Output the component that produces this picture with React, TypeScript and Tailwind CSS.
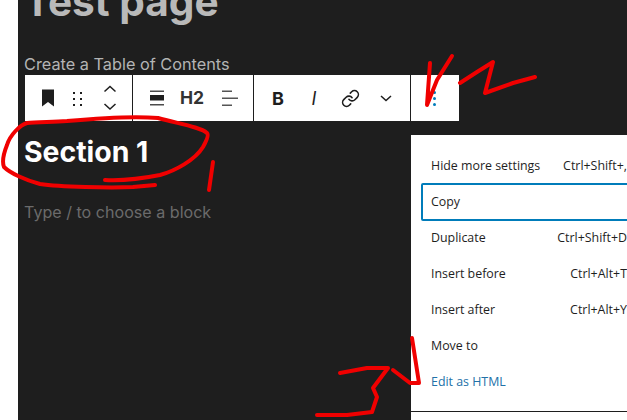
import React from "react";
import { Link } from "lucide-react";

const menuItems: { label: string; shortcut?: string; focus?: boolean; blue?: boolean }[] = [
  { label: "Hide more settings", shortcut: "Ctrl+Shift+," },
  { label: "Copy", focus: true },
  { label: "Duplicate", shortcut: "Ctrl+Shift+D" },
  { label: "Insert before", shortcut: "Ctrl+Alt+T" },
  { label: "Insert after", shortcut: "Ctrl+Alt+Y" },
  { label: "Move to" },
  { label: "Edit as HTML", blue: true },
];

function Bookmark() {
  return (
    <svg width="24" height="24" viewBox="0 0 24 24" className="text-[#1e1e1e]">
      <path d="M6 3.500h12v17l-6-4.600-6 4.600z" fill="currentColor" />
    </svg>
  );
}

function Drag() {
  return (
    <svg width="24" height="24" viewBox="0 0 24 24" fill="#1e1e1e">
      <path d="M6 6h2v2H6zM13 6h2v2h-2zM6 12h2v2H6zM13 12h2v2h-2zM6 18h2v2H6zM13 18h2v2h-2z" />
    </svg>
  );
}

function Mover() {
  return (
    <svg width="24" height="32" viewBox="0 0 24 32" fill="none" stroke="#1e1e1e" strokeWidth="1.5">
      <path d="M6.500 9.500l5.500-5 5.500 5" />
      <path d="M6.500 22l5.500 5 5.500-5" />
    </svg>
  );
}

function AlignWide() {
  return (
    <svg width="24" height="24" viewBox="0 0 24 24" fill="#1e1e1e">
      <path d="M5 4.500h14V6H5z" opacity=".8" />
      <path d="M5 9h14v5.500H5z" />
      <path d="M5 18h14v1.500H5z" opacity=".8" />
    </svg>
  );
}

function HeadingAlign() {
  return (
    <svg width="24" height="24" viewBox="0 0 24 24" fill="#555">
      <path d="M4 4.500h10V6H4zM4 11.500h16V13H4zM4 18.500h10V20H4z" />
    </svg>
  );
}

function Chevron() {
  return (
    <svg width="24" height="24" viewBox="0 0 24 24" fill="none" stroke="#1e1e1e" strokeWidth="1.5">
      <path d="M7 10l5 4.500 5-4.500" />
    </svg>
  );
}

function Annotations() {
  return (
    <svg
      width="627"
      height="420"
      viewBox="0 0 627 420"
      fill="none"
      stroke="#f00000"
      strokeWidth="4"
      strokeLinecap="round"
      strokeLinejoin="round"
      className="absolute inset-0 pointer-events-none"
    >
      <path d="M105 180C125 181 145 178 160 175C175 171 195 160 203 147C207 140 209 135 207 133C200 127 180 124 158 118C135 116 100 118 67 121C50 122 35 122 27 123C20 125 10 135 7 145C3 155 2 162 4 167C10 173 25 180 40 184C60 187 110 188 133 187L155 185" />
      <path d="M213 162L209 190" />
      <path d="M430 63L427 105L437 80L452 56" />
      <path d="M460 83L477 72L493 62L485 93L513 83L535 77" />
      <path d="M340 373L367 368L388 368L373 388L377 397L372 412L347 415L317 415" />
      <path d="M412 338L419 383L410 383L393 370" />
    </svg>
  );
}

export default function App() {
  return (
    <div className="relative flex h-[420px] w-[627px] overflow-hidden bg-white font-['Inter',sans-serif]">
      <div className="w-[18px] shrink-0 bg-white" />
      <main className="relative flex-1 bg-[#1e1e1e] pl-[6px]">
        <h1 className="mt-[-22px] h-[46px] text-[40.6px] font-bold leading-[48px] text-[#b9b9b9]">Test page</h1>
        <p className="mt-[29px] h-[22px] text-[16.3px] leading-[22px] text-[#b4b4b4]">Create a Table of Contents</p>
        <div className="ml-px flex h-[46px] w-[434px] bg-white text-[#1e1e1e]">
          <div className="flex w-[108px] items-center border-r border-[#1e1e1e] pl-[5px]">
            <div className="flex w-[36px] justify-center"><Bookmark /></div>
            <div className="flex w-[26px] justify-center"><Drag /></div>
            <div className="flex w-[36px] justify-center"><Mover /></div>
          </div>
          <div className="flex w-[121px] items-center border-r border-[#1e1e1e] pl-[6px]">
            <div className="flex w-[36px] justify-center"><AlignWide /></div>
            <span className="w-[34px] text-center text-[17.500px] font-bold text-[#333]">H2</span>
            <div className="ml-[4px] flex w-[34px] justify-center"><HeadingAlign /></div>
          </div>
          <div className="flex w-[157px] items-center border-r border-[#1e1e1e] pl-[6px]">
            <span className="w-[36px] text-center text-[18px] font-bold">B</span>
            <span className="w-[36px] text-center text-[18px] font-normal italic">I</span>
            <div className="flex w-[36px] justify-center"><Link size={19} strokeWidth={2} className="text-[#1e1e1e]" /></div>
            <div className="flex w-[36px] justify-center"><Chevron /></div>
          </div>
          <div className="flex flex-1 flex-col items-center justify-center gap-[3px] pr-[1px]">
            <span className="h-[3px] w-[3px] rounded-full bg-[#007cba]" />
            <span className="h-[3px] w-[3px] rounded-full bg-[#007cba]" />
            <span className="h-[3px] w-[3px] rounded-full bg-[#007cba]" />
          </div>
        </div>
        <h2 className="mt-[12px] h-[40px] text-[28.4px] font-bold leading-[38px] text-white">Section 1</h2>
        <p className="mt-[27px] text-[16.100px] leading-[24px] text-[#6b6b6b]">Type / to choose a block</p>
      </main>

      <div className="absolute left-[411px] top-[135px] h-[300px] w-[238px] bg-white pl-[10px] pr-[12px] pt-[13px] font-['Open_Sans',sans-serif] text-[12.4px] text-[#1e1e1e]">
        {menuItems.map((it) => (
          <div
            key={it.label}
            className={
              it.focus
                ? "my-[-1px] flex h-[38px] items-center justify-between rounded-[2px] border-2 border-[#007cba] px-[8px]"
                : it.blue
                  ? "flex h-[36px] items-center justify-between px-[10px] text-[#2271a8]"
                  : "flex h-[36px] items-center justify-between px-[10px]"
            }
          >
            <span>{it.label}</span>
            {it.shortcut ? <span>{it.shortcut}</span> : null}
          </div>
        ))}
        <div className="absolute left-0 right-0 top-[276px] h-px bg-[#1e1e1e]" />
      </div>
      <Annotations />
    </div>
  );
}
